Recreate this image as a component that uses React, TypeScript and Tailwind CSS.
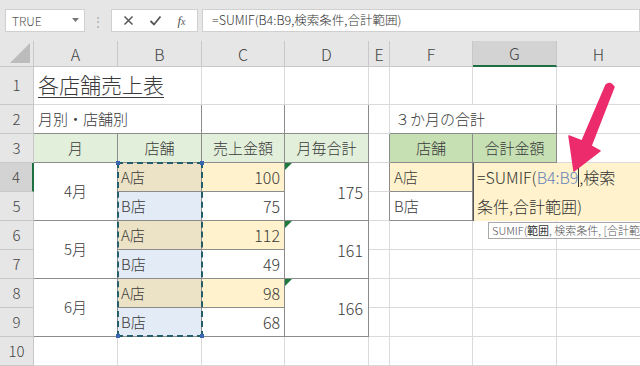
import React from "react";

const dk = "border-r-[#8c8c8c] border-b-[#8c8c8c]";
const cell = "border-r border-b border-[#dadada] flex items-center text-[15px] text-[#3a3a3a]";

const Tri = () => (
  <span className="absolute left-0 top-0 w-0 h-0 border-t-[7px] border-r-[7px] border-t-[#1e7a3c] border-r-transparent" />
);

const ColHead = ({ label, selected }: { label: string; selected?: boolean }) => (
  <div
    className={`flex items-center justify-center border-r border-b border-[#c8c8c8] text-[16px] text-[#444] ${
      selected ? "bg-[#d3d3d3] border-b-2 border-b-[#1e6e42] text-[#1e5c38]" : "bg-[#e6e6e6]"
    }`}
  >
    {label}
  </div>
);

const RowHead = ({ n, selected }: { n: number; selected?: boolean }) => (
  <div
    className={`flex items-center justify-center border-b border-[#c8c8c8] text-[15px] text-[#444] ${
      selected ? "bg-[#d3d3d3] border-r-2 border-r-[#1e6e42]" : "bg-[#e6e6e6] border-r"
    }`}
  >
    {n}
  </div>
);

export default function App() {
  return (
    <div className="relative w-[640px] h-[366px] overflow-hidden bg-white font-light font-['Noto_Sans_CJK_JP',sans-serif]">
      {/* formula bar */}
      <div className="h-[41px] bg-[#e6e6e6] flex items-start pt-[9px] pl-[5px]">
        <div className="w-[80px] h-[23px] bg-white border border-[#d0d0d0] flex items-center justify-between pl-[6px] pr-[5px] text-[12px] text-[#555]">
          <span>TRUE</span>
          <svg width="7" height="5" viewBox="0 0 7 5">
            <path d="M0 0h7L3.5 4z" fill="#777" />
          </svg>
        </div>
        <div className="w-[26px] h-[23px] flex items-center justify-center text-[#aaa] text-[12px]">⋮</div>
        <div className="w-[87px] h-[23px] bg-white border border-[#d0d0d0] flex items-center justify-around px-[4px]">
          <svg width="11" height="11" viewBox="0 0 11 11">
            <path d="M1.5 1.5l8 8M9.5 1.5l-8 8" stroke="#555" strokeWidth="1.5" />
          </svg>
          <svg width="13" height="11" viewBox="0 0 13 11">
            <path d="M1.5 6l3.5 3.5L11.5 1.5" stroke="#555" strokeWidth="1.8" fill="none" />
          </svg>
          <span className="font-['Liberation_Serif',serif] italic text-[13px] text-[#555]">
            f<span className="text-[10px]">x</span>
          </span>
        </div>
        <div className="ml-[4px] flex-1 h-[23px] bg-white border border-[#d0d0d0] flex items-center pl-[9px] text-[12.5px] text-[#333]">
          =SUMIF(B4:B9,検索条件,合計範囲)
        </div>
      </div>

      {/* sheet grid */}
      <div className="grid grid-cols-[34px_84px_84px_83px_84px_21px_83px_84px_84px] grid-rows-[26px_38px_repeat(9,29px)]">
        <div className="bg-[#e6e6e6] border-r border-b border-[#c8c8c8] flex items-end justify-end p-[3px]">
          <svg width="20" height="20" viewBox="0 0 20 20">
            <path d="M20 0V20H0z" fill="#bcbcbc" />
          </svg>
        </div>
        <ColHead label="A" />
        <ColHead label="B" />
        <ColHead label="C" />
        <ColHead label="D" />
        <ColHead label="E" />
        <ColHead label="F" />
        <ColHead label="G" selected />
        <ColHead label="H" />

        {/* row 1 */}
        <RowHead n={1} />
        <div className={`${cell} col-span-2 items-end pb-[4px] pl-[4px]`}>
          <span className="text-[21px] underline underline-offset-[4px] decoration-1">各店舗売上表</span>
        </div>
        <div className={cell} />
        <div className={cell} />
        <div className={cell} />
        <div className={cell} />
        <div className={cell} />
        <div className={cell} />

        {/* row 2 */}
        <RowHead n={2} />
        <div className={`${cell} ${dk} col-span-2 pl-[4px]`}>月別・店舗別</div>
        <div className={`${cell} ${dk}`} />
        <div className={`${cell} ${dk}`} />
        <div className={cell} />
        <div className={`${cell} ${dk} col-span-2 pl-[5px] whitespace-nowrap`}>３か月の合計</div>
        <div className={cell} />

        {/* row 3 */}
        <RowHead n={3} />
        <div className={`${cell} ${dk} bg-[#e2efda] justify-center`}>月</div>
        <div className={`${cell} ${dk} bg-[#e2efda] justify-center`}>店舗</div>
        <div className={`${cell} ${dk} bg-[#e2efda] justify-center`}>売上金額</div>
        <div className={`${cell} ${dk} bg-[#e2efda] justify-center`}>月毎合計</div>
        <div className={`${cell} border-r-[#8c8c8c]`} />
        <div className={`${cell} ${dk} bg-[#c6e0b4] justify-center`}>店舗</div>
        <div className={`${cell} ${dk} bg-[#c6e0b4] justify-center`}>合計金額</div>
        <div className={cell} />

        {/* row 4 */}
        <RowHead n={4} selected />
        <div className={`${cell} ${dk} row-span-2 justify-center`}>4月</div>
        <div className={`${cell} ${dk} bg-[#ece2c6] pl-[3px]`}>A店</div>
        <div className={`${cell} ${dk} bg-[#fff2cc] justify-end pr-[4px] text-[16px]`}>100</div>
        <div className={`${cell} ${dk} row-span-2 justify-end pr-[5px] text-[16px] relative`}>
          <Tri />
          175
        </div>
        <div className={`${cell} border-r-[#8c8c8c]`} />
        <div className={`${cell} ${dk} bg-[#fff2cc] pl-[4px]`}>A店</div>
        <div className="col-span-2 row-span-2 bg-[#fff2cc] border-l border-[#555] pl-[3px] text-[16px] leading-[29px] text-[#333] whitespace-nowrap">
          =SUMIF(<span className="text-[#6483b8]">B4:B9</span>
          <span className="inline-block w-px h-[19px] bg-[#333] align-[-3px]" />,検索
          <br />
          条件,合計範囲)
        </div>

        {/* row 5 */}
        <RowHead n={5} />
        <div className={`${cell} ${dk} bg-[#e3ebf7] pl-[3px]`}>B店</div>
        <div className={`${cell} ${dk} justify-end pr-[4px] text-[16px]`}>75</div>
        <div className={`${cell} border-r-[#8c8c8c]`} />
        <div className={`${cell} ${dk} pl-[4px]`}>B店</div>

        {/* row 6 */}
        <RowHead n={6} />
        <div className={`${cell} ${dk} row-span-2 justify-center`}>5月</div>
        <div className={`${cell} ${dk} bg-[#ece2c6] pl-[3px]`}>A店</div>
        <div className={`${cell} ${dk} bg-[#fff2cc] justify-end pr-[4px] text-[16px]`}>112</div>
        <div className={`${cell} ${dk} row-span-2 justify-end pr-[5px] text-[16px] relative`}>
          <Tri />
          161
        </div>
        <div className={cell} />
        <div className={cell} />
        <div className={cell} />
        <div className={cell} />

        {/* row 7 */}
        <RowHead n={7} />
        <div className={`${cell} ${dk} bg-[#e3ebf7] pl-[3px]`}>B店</div>
        <div className={`${cell} ${dk} justify-end pr-[4px] text-[16px]`}>49</div>
        <div className={cell} />
        <div className={cell} />
        <div className={cell} />
        <div className={cell} />

        {/* row 8 */}
        <RowHead n={8} />
        <div className={`${cell} ${dk} row-span-2 justify-center`}>6月</div>
        <div className={`${cell} ${dk} bg-[#ece2c6] pl-[3px]`}>A店</div>
        <div className={`${cell} ${dk} bg-[#fff2cc] justify-end pr-[4px] text-[16px]`}>98</div>
        <div className={`${cell} ${dk} row-span-2 justify-end pr-[5px] text-[16px] relative`}>
          <Tri />
          166
        </div>
        <div className={cell} />
        <div className={cell} />
        <div className={cell} />
        <div className={cell} />

        {/* row 9 */}
        <RowHead n={9} />
        <div className={`${cell} ${dk} bg-[#e3ebf7] pl-[3px]`}>B店</div>
        <div className={`${cell} ${dk} justify-end pr-[4px] text-[16px]`}>68</div>
        <div className={cell} />
        <div className={cell} />
        <div className={cell} />
        <div className={cell} />

        {/* row 10 */}
        <RowHead n={10} />
        <div className={cell} />
        <div className={cell} />
        <div className={cell} />
        <div className={cell} />
        <div className={cell} />
        <div className={cell} />
        <div className={cell} />
        <div className={cell} />
      </div>

      {/* range reference marquee B4:B9 */}
      <div className="absolute left-[117px] top-[162px] w-[86px] h-[175px] border-2 border-dashed border-[#245e6a]">
        <span className="absolute -left-[3px] -top-[3px] w-[4px] h-[4px] bg-[#3a66b0]" />
        <span className="absolute -right-[3px] -top-[3px] w-[4px] h-[4px] bg-[#3a66b0]" />
        <span className="absolute -left-[3px] -bottom-[3px] w-[4px] h-[4px] bg-[#3a66b0]" />
        <span className="absolute -right-[3px] -bottom-[3px] w-[4px] h-[4px] bg-[#3a66b0]" />
      </div>

      {/* function tooltip */}
      <div className="absolute left-[488px] top-[222px] h-[17px] pl-[3px] pr-[2px] bg-white border border-[#a8a8a8] text-[11px] leading-[15px] text-[#555] whitespace-nowrap">
        SUMIF(<b className="text-[#333]">範囲</b>, 検索条件, [合計範囲]
      </div>

      {/* pink arrow */}
      <svg className="absolute left-0 top-0" width="640" height="366" viewBox="0 0 640 366">
        <path
          d="M574 171 L569 136 L582 141 L606 85 Q610 81 614 87 L591 146 L600 151 Z"
          fill="#ec2b6d"
          stroke="#ec2b6d"
          strokeWidth="1.5"
          strokeLinejoin="round"
        />
      </svg>
    </div>
  );
}
